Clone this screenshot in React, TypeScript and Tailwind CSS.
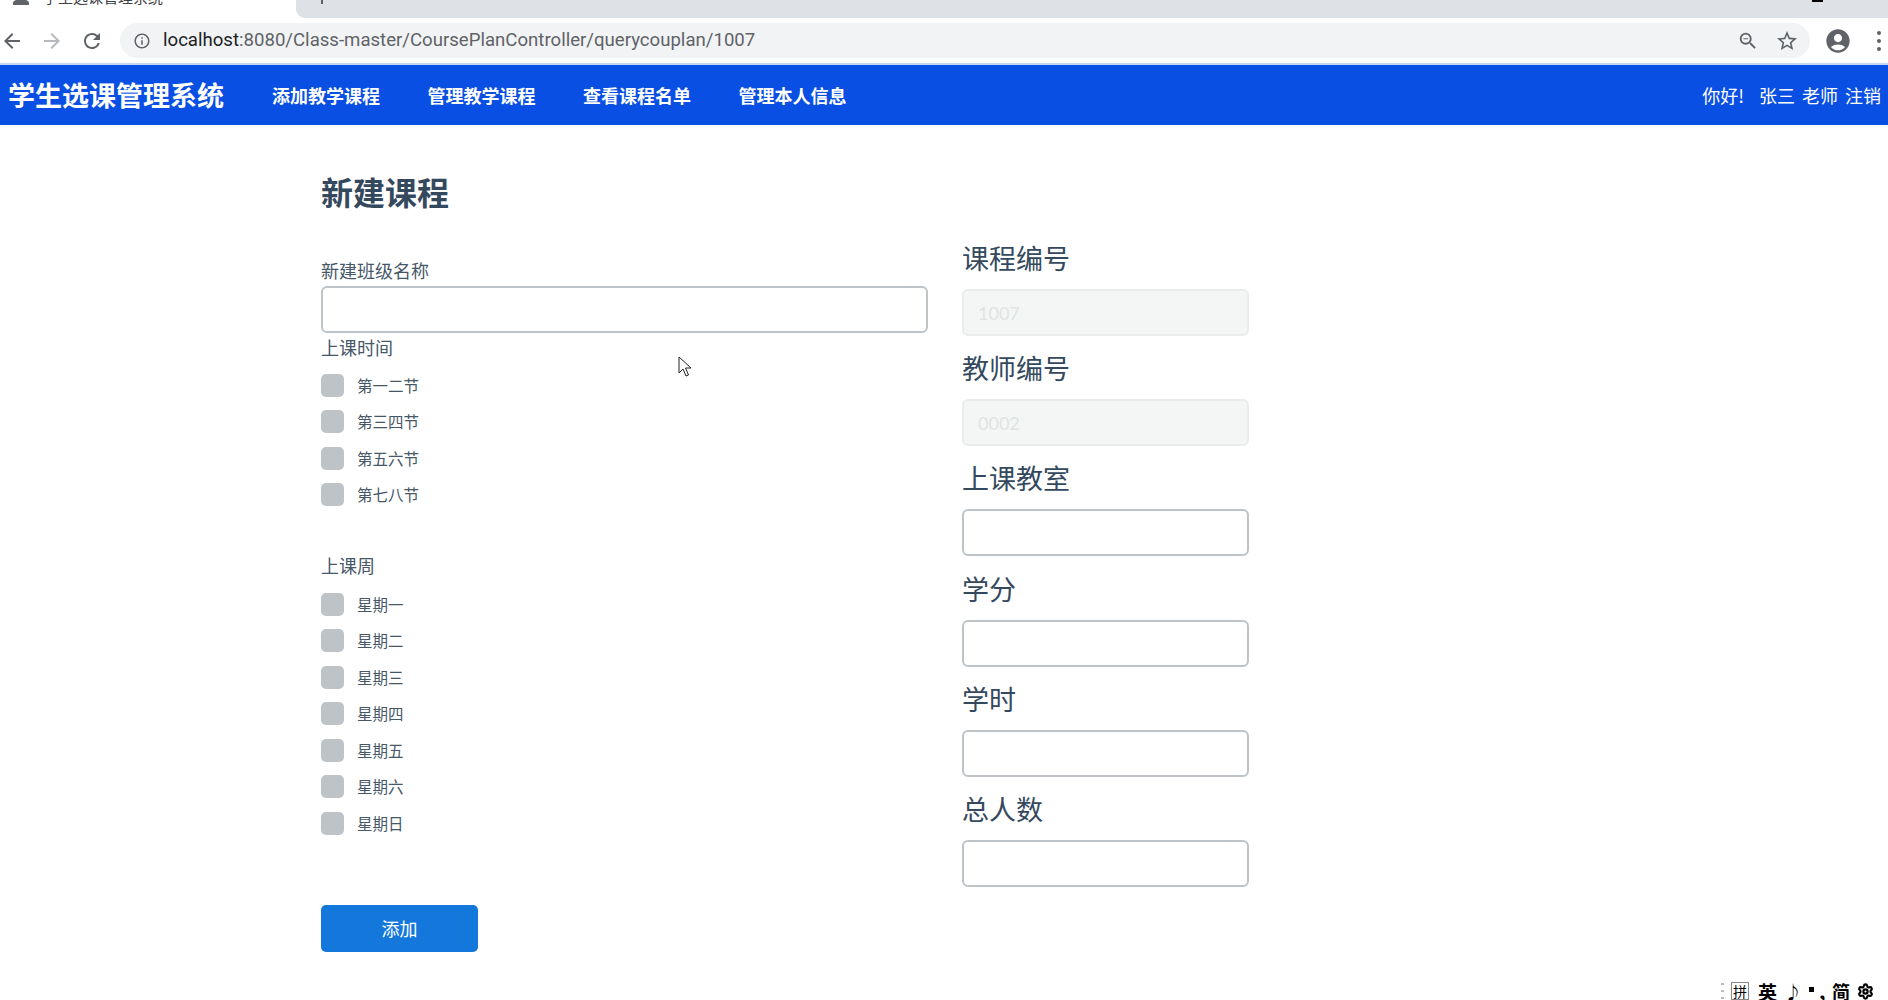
import { Settings } from 'lucide-react';
import { MdAccountCircle, MdArrowBack, MdArrowForward, MdInfoOutline, MdPerson, MdRefresh, MdStarBorder, MdZoomOut, MdClose } from 'react-icons/md';

const cjk = { fontFamily: '"Noto Sans CJK SC", sans-serif' };

const navLinks = ['添加教学课程', '管理教学课程', '查看课程名单', '管理本人信息'];
const periods = ['第一二节', '第三四节', '第五六节', '第七八节'];
const weekdays = ['星期一', '星期二', '星期三', '星期四', '星期五', '星期六', '星期日'];

// Right column: disabled inputs hold a value
const rightFields = [
  { label: '课程编号', value: '1007' },
  { label: '教师编号', value: '0002' },
  { label: '上课教室' },
  { label: '学分' },
  { label: '学时' },
  { label: '总人数' },
];

// Browser tab strip and address bar (the top of the window is cut off in the picture)
const BrowserChrome = () => (
  <div className="h-[65px] bg-white">
    <div className="flex h-[18px] overflow-hidden bg-white">
      <div className="flex h-[18px] w-[296px] items-start pl-[9px]">
        <MdPerson className="mt-[-15px] size-[24px] shrink-0 text-[#5f6368]" />
        <span className="ml-[10px] mt-[-13px] whitespace-nowrap text-[15px] leading-[20px] text-[#3c4043]">学生选课管理系统</span>
        <MdClose className="ml-[104px] mt-[-13px] size-[16px] shrink-0 text-[#3c4043]" />
      </div>
      <div className="relative flex-1 rounded-bl-[9px] bg-[#dee1e6]">
        <span className="absolute left-[25px] top-0 h-[4px] w-[2px] bg-[#5f6368]" />
        <span className="absolute left-[1516px] top-0 h-[1.5px] w-[11px] bg-black" />
      </div>
    </div>
    <div className="flex h-[45px] items-center">
      <div className="flex w-[120px] items-center gap-[16px]">
        <MdArrowBack className="size-[24px] text-[#5f6368]" />
        <MdArrowForward className="size-[24px] text-[#b6b9bd]" />
        <MdRefresh className="size-[24px] text-[#5f6368]" />
      </div>
      <div className="flex h-[35px] w-[1690px] items-center rounded-full bg-[#f1f3f4] pl-[13px] pr-[11px]">
        <MdInfoOutline className="size-[18px] text-[#5f6368]" />
        <span className="ml-[12px] flex-1 text-[18.6px] text-[#5f6368]" style={{ fontFamily: 'Roboto, sans-serif' }}>
          <span className="text-[#202124]">localhost</span>:8080/Class-master/CoursePlanController/querycouplan/1007
        </span>
        <MdZoomOut className="size-[22px] text-[#5f6368]" />
        <MdStarBorder className="ml-[16px] size-[24px] text-[#5f6368]" />
      </div>
      <MdAccountCircle className="ml-[14px] size-[28px] text-[#5f6368]" />
      <div className="ml-[25px] flex flex-col gap-[4px]">
        <span className="size-[4px] rounded-full bg-[#5f6368]" />
        <span className="size-[4px] rounded-full bg-[#5f6368]" />
        <span className="size-[4px] rounded-full bg-[#5f6368]" />
      </div>
    </div>
    <div className="h-[2px] bg-[#c3d5f2]" />
  </div>
);

const Navbar = () => (
  <nav className="flex h-[60px] items-center bg-[#0a4fe3] pl-[8px] pr-[7px] text-white">
    <h1 className="text-[27px] font-bold leading-[40px]">学生选课管理系统</h1>
    <div className="ml-[48px] flex gap-[47.5px]">
      {navLinks.map((link) => (
        <a key={link} className="text-[18px] font-bold">
          {link}
        </a>
      ))}
    </div>
    <div className="ml-auto flex text-[18px]">
      <span>你好!</span>
      <span className="ml-[15px]">张三</span>
      <span className="ml-[7px]">老师</span>
      <span className="ml-[7px]">注销</span>
    </div>
  </nav>
);

const CheckRow = ({ label }: { label: string }) => (
  <label className="flex h-[36.5px] items-center">
    <span className="size-[23px] rounded-[5px] bg-[#bdc3c7]" />
    <span className="ml-[13px] text-[15.5px] text-[#465768]">{label}</span>
  </label>
);

const textInput = 'block h-[47px] rounded-[6px] border-2 border-[#bdc3c7] bg-white';

const CourseForm = () => (
  <main className="pl-[321px] pt-[44px] text-[#34495e]">
    <h2 className="h-[46px] text-[32px] font-bold leading-[44px]">新建课程</h2>
    <div className="flex">
      {/* Left column */}
      <div className="w-[607px] pt-[42px]">
        <div className="h-[26px] text-[18px] leading-[26px] text-[#465768]">新建班级名称</div>
        <input className={`mt-[3px] w-full ${textInput}`} />
        <div className="mt-px h-[26px] text-[18px] leading-[26px] text-[#465768]">上课时间</div>
        <div className="mt-[7px]">
          {periods.map((p) => (
            <CheckRow key={p} label={p} />
          ))}
        </div>
        <div className="mt-[39px] h-[26px] text-[18px] leading-[26px] text-[#465768]">上课周</div>
        <div className="mt-[8px]">
          {weekdays.map((d) => (
            <CheckRow key={d} label={d} />
          ))}
        </div>
        <button className="mt-[63px] h-[47px] w-[157px] rounded-[5px] bg-[#1477db] text-[18px] text-white">添加</button>
      </div>
      {/* Right column */}
      <div className="ml-[34px] flex w-[287px] flex-col gap-[14.2px] pt-[25px]">
        {rightFields.map((f) => (
          <div key={f.label}>
            <div className="mb-3 h-[37px] text-[27px] leading-[35px]">{f.label}</div>
            {f.value ? (
              <input
                disabled
                value={f.value}
                className="block h-[47px] w-full rounded-[6px] border-2 border-[#e8ecec] bg-[#f4f6f6] px-[14px] text-[18px] text-[#dfe3e3]"
                style={{ fontFamily: 'Lato, sans-serif' }}
              />
            ) : (
              <input className={`w-full ${textInput}`} />
            )}
          </div>
        ))}
      </div>
    </div>
  </main>
);

export default function App() {
  return (
    <div className="relative h-[1000px] w-[1888px] overflow-hidden bg-white" style={cjk}>
      <BrowserChrome />
      <Navbar />
      <CourseForm />

      {/* Mouse pointer */}
      <svg className="absolute left-[678px] top-[356px]" width="14" height="22" viewBox="0 0 14 22">
        <path d="M1 1v16l4-4 3 7 2.5-1-3-7h5.5z" fill="#fff" stroke="#222" strokeWidth="1" />
      </svg>

      {/* Input method toolbar */}
      <div className="absolute left-[1721px] top-[982px] flex h-[18px] items-center font-bold text-black">
        <span className="flex h-[16px] w-[3px] flex-col justify-between">
          <span className="h-[2px] bg-[#bbb]" />
          <span className="h-[2px] bg-[#bbb]" />
          <span className="h-[2px] bg-[#bbb]" />
        </span>
        <span className="ml-[7px] flex size-[18px] items-center justify-center border border-[#888] text-[14px] font-normal leading-none">拼</span>
        <span className="ml-[9px] text-[19px] leading-none">英</span>
        <span className="ml-[7px] w-[17px] text-[18px] leading-none">♪</span>
        <span className="ml-[8px] flex w-[17px]">
          <span className="mt-[2px] size-[5px] bg-black" />
          <span className="ml-[5px] text-[20px] leading-[12px]">,</span>
        </span>
        <span className="ml-[6px] text-[18px] leading-none">简</span>
        <Settings className="ml-[7px] size-[17px]" strokeWidth={3} />
      </div>
    </div>
  );
}
